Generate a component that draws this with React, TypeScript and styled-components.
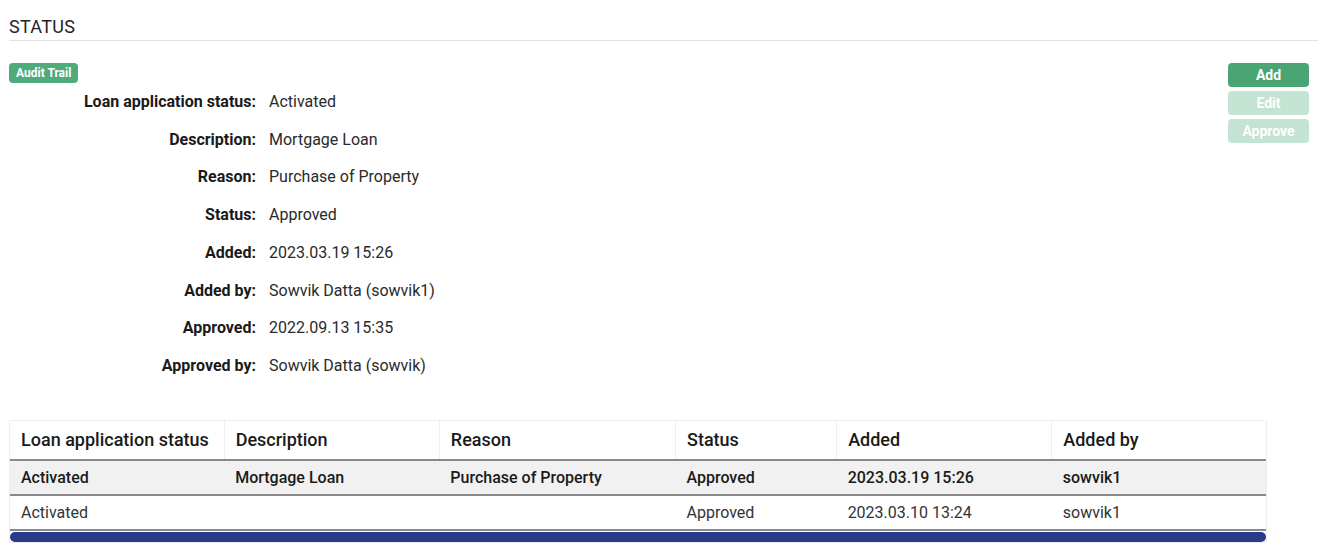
import React from "react";
import styled, { createGlobalStyle } from "styled-components";

const GlobalStyle = createGlobalStyle`
  body {
    margin: 0;
    background: #fff;
    font-family: Roboto, "Noto Sans", sans-serif;
    color: #222;
  }
`;

const Page = styled.div`
  padding: 0 9px;
`;

const Title = styled.h2`
  margin: 0 -9px 0 0;
  padding: 16px 0 0;
  height: 24px;
  font-size: 18px;
  font-weight: 400;
  color: #1f2328;
  letter-spacing: 0.3px;
  border-bottom: 1px solid #e2e2e2;
`;

const Body = styled.div`
  display: flex;
  justify-content: space-between;
  padding-top: 22px;
`;

const SmallButton = styled.button`
  border: none;
  border-radius: 4px;
  background: #4faa7c;
  color: #fff;
  font-family: inherit;
  font-weight: 700;
  font-size: 12px;
  height: 20px;
  padding: 0 7px;
  cursor: pointer;
`;

const Details = styled.div`
  display: flex;
  flex-direction: column;
  align-items: flex-start;
`;

const Fields = styled.dl`
  display: grid;
  grid-template-columns: 247px auto;
  column-gap: 13px;
  margin: 0;
  font-size: 16px;
`;

const Label = styled.dt`
  text-align: right;
  font-weight: 700;
  color: #1a1a1a;
  line-height: 37.7px;
`;

const Value = styled.dd`
  margin: 0;
  color: #2a2a2a;
  line-height: 37.7px;
`;

const Actions = styled.div`
  display: flex;
  flex-direction: column;
  gap: 4px;
  width: 81px;
`;

const ActionButton = styled.button<{ $disabled?: boolean }>`
  border: none;
  border-radius: 4px;
  height: 24px;
  font-family: inherit;
  font-weight: 700;
  font-size: 14px;
  color: #fff;
  background: ${(p) => (p.$disabled ? "#c3e4d2" : "#4aa574")};
  cursor: ${(p) => (p.$disabled ? "default" : "pointer")};
`;

const TableWrap = styled.div`
  margin-top: 35px;
  width: 1256px;
  border: 1px solid #eeeeee;
  border-radius: 2px;
`;

const Table = styled.table`
  width: 100%;
  border-collapse: collapse;
  font-size: 16px;
  table-layout: fixed;
`;

const Th = styled.th`
  text-align: left;
  font-weight: 500;
  font-size: 18px;
  color: #1a1a1a;
  height: 38px;
  padding: 0 11px;
  border-right: 1px solid #eeeeee;
  border-bottom: 2px solid #8a8a8a;
  &:last-child {
    border-right: none;
  }
`;

const Tr = styled.tr<{ $highlight?: boolean }>`
  background: ${(p) => (p.$highlight ? "#f1f1f1" : "#fff")};
  font-weight: ${(p) => (p.$highlight ? 500 : 400)};
  color: ${(p) => (p.$highlight ? "#1a1a1a" : "#333")};
`;

const Td = styled.td`
  height: 33px;
  padding: 0 11px;
  border-bottom: 2px solid #8a8a8a;
`;

const Scrollbar = styled.div`
  height: 10px;
  margin-top: 1px;
  background: #283b8b;
  border-radius: 5px;
`;

const fields: [string, string][] = [
  ["Loan application status", "Activated"],
  ["Description", "Mortgage Loan"],
  ["Reason", "Purchase of Property"],
  ["Status", "Approved"],
  ["Added", "2023.03.19 15:26"],
  ["Added by", "Sowvik Datta (sowvik1)"],
  ["Approved", "2022.09.13 15:35"],
  ["Approved by", "Sowvik Datta (sowvik)"],
];

const columns = [
  { title: "Loan application status", width: 214 },
  { title: "Description", width: 215 },
  { title: "Reason", width: 236 },
  { title: "Status", width: 161 },
  { title: "Added", width: 215 },
  { title: "Added by", width: 214 },
];

const rows = [
  ["Activated", "Mortgage Loan", "Purchase of Property", "Approved", "2023.03.19 15:26", "sowvik1"],
  ["Activated", "", "", "Approved", "2023.03.10 13:24", "sowvik1"],
];

export default function App() {
  return (
    <>
      <GlobalStyle />
      <Page>
        <Title>STATUS</Title>
        <Body>
          <Details>
            <SmallButton>Audit Trail</SmallButton>
            <Fields>
              {fields.map(([label, value]) => (
                <React.Fragment key={label}>
                  <Label>{label}:</Label>
                  <Value>{value}</Value>
                </React.Fragment>
              ))}
            </Fields>
          </Details>
          <Actions>
            <ActionButton>Add</ActionButton>
            <ActionButton $disabled>Edit</ActionButton>
            <ActionButton $disabled>Approve</ActionButton>
          </Actions>
        </Body>
        <TableWrap>
          <Table>
            <colgroup>
              {columns.map((c) => (
                <col key={c.title} style={{ width: c.width }} />
              ))}
            </colgroup>
            <thead>
              <tr>
                {columns.map((c) => (
                  <Th key={c.title}>{c.title}</Th>
                ))}
              </tr>
            </thead>
            <tbody>
              {rows.map((r, i) => (
                <Tr key={i} $highlight={i === 0}>
                  {r.map((cell, j) => (
                    <Td key={j}>{cell}</Td>
                  ))}
                </Tr>
              ))}
            </tbody>
          </Table>
          <Scrollbar />
        </TableWrap>
      </Page>
    </>
  );
}
